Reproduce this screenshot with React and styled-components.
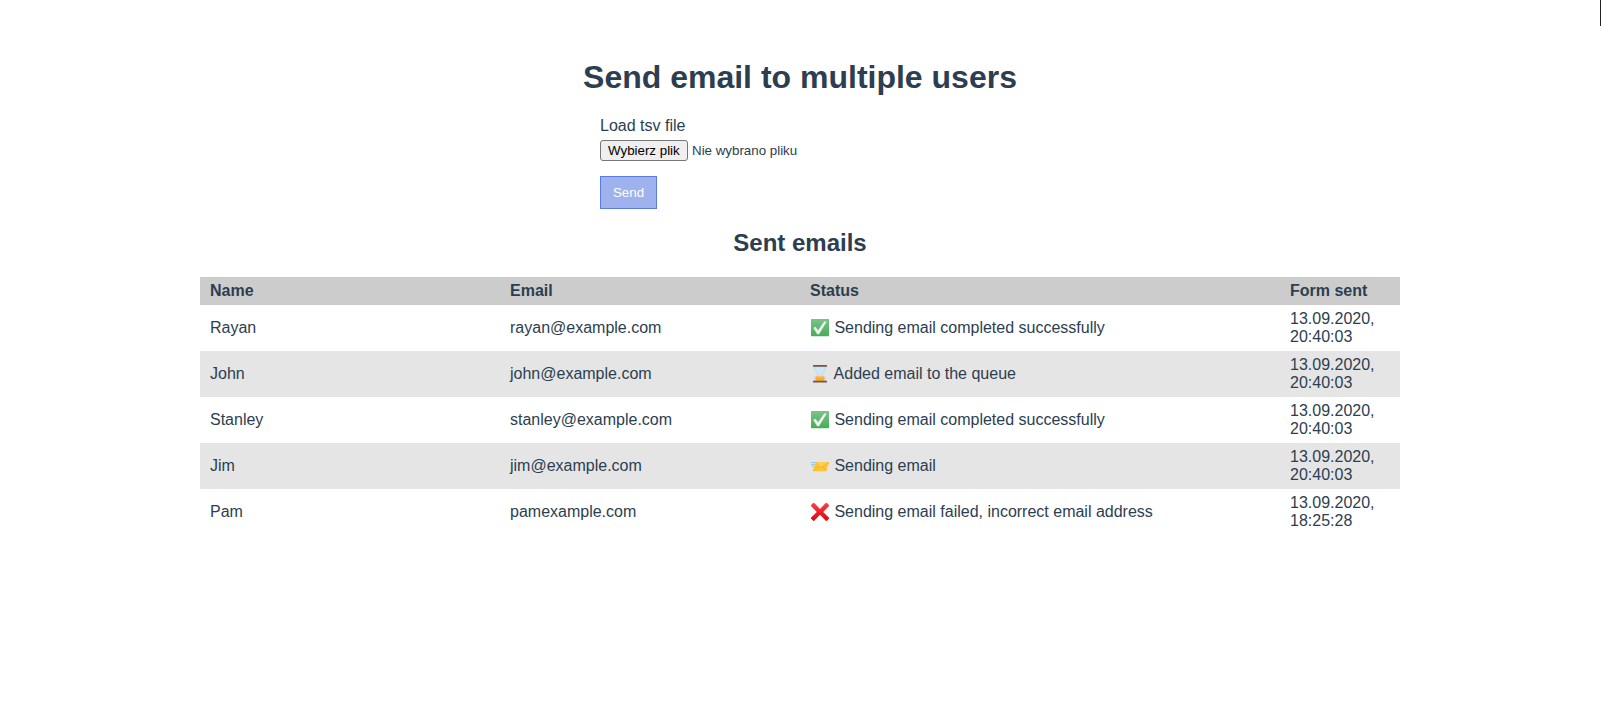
import React from "react";
import styled, { createGlobalStyle } from "styled-components";

const GlobalStyle = createGlobalStyle`
  body { margin: 0; background: #fff; overflow: hidden; }
`;
const Shell = styled.div`
  display: flex;
  align-items: flex-start;
`;
const Page = styled.main`
  flex: 1;
  display: flow-root;
  padding-top: 59px;
  height: 726px;
  box-sizing: border-box;
  font-family: "Liberation Sans", Arial, sans-serif;
  font-size: 16px;
  color: #2c3e50;
`;
const EdgeMark = styled.div`
  width: 1px;
  height: 26px;
  background: #202124;
`;
const Title = styled.h1`
  margin: 0 0 22px;
  font-size: 32px;
  line-height: 36px;
  text-align: center;
`;
const Subtitle = styled.h2`
  margin: 20px 0 21px;
  font-size: 24px;
  line-height: 27px;
  text-align: center;
`;
const Form = styled.form`
  width: 400px;
  margin: 0 auto;
  display: flex;
  flex-direction: column;
  align-items: flex-start;
`;
const Label = styled.label`
  line-height: 18px;
  margin-bottom: 5px;
`;
const FileRow = styled.div`
  display: flex;
  align-items: center;
  gap: 4px;
  font-size: 13.333px;
  height: 21px;
  margin-bottom: 15px;
`;
const FileButton = styled.button`
  box-sizing: border-box;
  width: 88px;
  height: 21px;
  padding: 1px 0 1px 7px;
  text-align: left;
  font: 13.333px "Liberation Sans", Arial, sans-serif;
  border: 1px solid #767676;
  border-radius: 3px;
  background: #efefef;
  color: #000;
`;
const SendButton = styled.button`
  box-sizing: border-box;
  width: 57px;
  height: 33px;
  padding: 0;
  border: 1px solid #587be4;
  background: #a0b2ed;
  color: #fff;
  font: 13.333px "Liberation Sans", Arial, sans-serif;
`;
const Table = styled.table`
  width: 1200px;
  margin: 0 auto;
  table-layout: fixed;
  border-collapse: collapse;
  line-height: 18px;
`;
const Col = styled.col`
  width: ${(p) => p.$width};
`;
const Row = styled.tr`
  background: ${(p) => p.$bg};
`;
const Head = styled.th`
  padding: 5px 10px;
  text-align: left;
`;
const Cell = styled.td`
  padding: 5px 10px;
`;
const Status = styled.div`
  display: flex;
  align-items: center;
  height: 18px;
`;
const StatusText = styled.span`
  white-space: pre;
`;
const Icon = styled.svg`
  flex: none;
  width: 20px;
  height: 20px;
`;

const DoneIcon = () => (
  <Icon viewBox="0 0 20 20">
    <defs>
      <linearGradient id="done" x1="0" y1="0" x2="0" y2="1">
        <stop offset="0" stopColor="#7cc486" />
        <stop offset="1" stopColor="#45ae58" />
      </linearGradient>
    </defs>
    <rect x="1" y="1" width="18" height="17.6" rx="0.8" fill="#a5d6ad" />
    <rect x="1" y="1" width="18" height="17" rx="0.8" fill="url(#done)" />
    <path d="M3.3 10 5.4 8.8 8 12.2 14.4 3.3 16.6 3.8 9 16.2 7.3 16.2Z" fill="#f1f1f1" />
  </Icon>
);
const QueueIcon = () => (
  <Icon viewBox="0 0 20 20">
    <path d="M4.4 2.5h11.2C15.6 7 13.5 8.3 11.5 10c2 1.7 4.1 3 4.1 7.3H4.4C4.4 13 6.5 11.7 8.5 10 6.5 8.3 4.4 7 4.4 2.5Z" fill="#cde6f6" stroke="#b2cfe0" strokeWidth="0.6" />
    <path d="M5.6 17v-3.5q0-1.5 1.5-1.5h5.8q1.5 0 1.5 1.5V17Z" fill="#f8ab38" />
    <path d="M6.8 12.2h6.4l.5 1.4H6.3Z" fill="#ffc46b" />
    <rect x="3" y="1.1" width="14" height="1.7" rx="0.5" fill="#795548" />
    <rect x="3" y="16.8" width="14" height="1.6" rx="0.5" fill="#795548" />
  </Icon>
);
const SendingIcon = () => (
  <Icon viewBox="0 0 20 20">
    <path d="M6.2 6.2h12.3q.8 0 .5.8l-2.6 7.4q-.3.8-1.1.8H3.4q-.8 0-.5-.8l2.3-7.3q.2-.9 1-.9Z" fill="#fbc537" />
    <path d="M5.6 6.4h13l-7.8 5.1Z" fill="#ffd04f" />
    <path d="m5.6 6.5 5.1 4.9 8-4.9M3.2 14.8l5.9-4.7M16.1 14.8l-3.3-4.5" fill="none" stroke="#e9a91f" strokeWidth="0.5" />
    <path d="M1 6.6h4.1M1 8.6h3.5M2.3 10.5h1.5" stroke="#85c5f3" strokeWidth="1" />
  </Icon>
);
const FailedIcon = () => (
  <Icon viewBox="0 0 20 20">
    <defs>
      <linearGradient id="failed" x1="0" y1="0" x2="0" y2="1">
        <stop offset="0" stopColor="#ff3d43" />
        <stop offset="1" stopColor="#d50a13" />
      </linearGradient>
    </defs>
    <path d="M1.2 3 3.1 1.1q.7-.6 1.4.1L10 7.1l5.5-5.9q.7-.7 1.4-.1L18.8 3q.6.6 0 1.3L13.2 9.9l5.6 5.6q.6.7 0 1.3l-1.9 1.9q-.7.5-1.4-.1L10 12.8l-5.5 5.8q-.7.6-1.4.1l-1.9-1.9q-.6-.6 0-1.3L6.8 9.9 1.2 4.3q-.6-.7 0-1.3Z" fill="url(#failed)" />
  </Icon>
);

const statuses = {
  done: [DoneIcon, "Sending email completed successfully"],
  queued: [QueueIcon, "Added email to the queue"],
  sending: [SendingIcon, "Sending email"],
  failed: [FailedIcon, "Sending email failed, incorrect email address"],
};

const emails = [
  { name: "Rayan", email: "rayan@example.com", status: "done", sent: "13.09.2020, 20:40:03" },
  { name: "John", email: "john@example.com", status: "queued", sent: "13.09.2020, 20:40:03" },
  { name: "Stanley", email: "stanley@example.com", status: "done", sent: "13.09.2020, 20:40:03" },
  { name: "Jim", email: "jim@example.com", status: "sending", sent: "13.09.2020, 20:40:03" },
  { name: "Pam", email: "pamexample.com", status: "failed", sent: "13.09.2020, 18:25:28" },
];

function EmailRow({ item, striped }) {
  const [StatusIcon, text] = statuses[item.status];
  return (
    <Row $bg={striped ? "#e5e5e5" : "#fff"}>
      <Cell>{item.name}</Cell>
      <Cell>{item.email}</Cell>
      <Cell><Status><StatusIcon /><StatusText>{` ${text}`}</StatusText></Status></Cell>
      <Cell>{item.sent}</Cell>
    </Row>
  );
}

export default function App() {
  return (
    <Shell>
      <GlobalStyle />
      <Page>
        <Title>Send email to multiple users</Title>
        <Form>
          <Label>Load tsv file</Label>
          <FileRow>
            <FileButton type="button">Wybierz plik</FileButton>
            <span>Nie wybrano pliku</span>
          </FileRow>
          <SendButton type="button">Send</SendButton>
        </Form>
        <Subtitle>Sent emails</Subtitle>
        <Table>
          <colgroup>
            <Col $width="25%" /><Col $width="25%" /><Col $width="40%" /><Col $width="10%" />
          </colgroup>
          <thead>
            <Row $bg="#ccc">
              <Head>Name</Head><Head>Email</Head><Head>Status</Head><Head>Form sent</Head>
            </Row>
          </thead>
          <tbody>
            {emails.map((item, i) => (
              <EmailRow key={item.name} item={item} striped={i % 2 === 1} />
            ))}
          </tbody>
        </Table>
      </Page>
      <EdgeMark />
    </Shell>
  );
}
